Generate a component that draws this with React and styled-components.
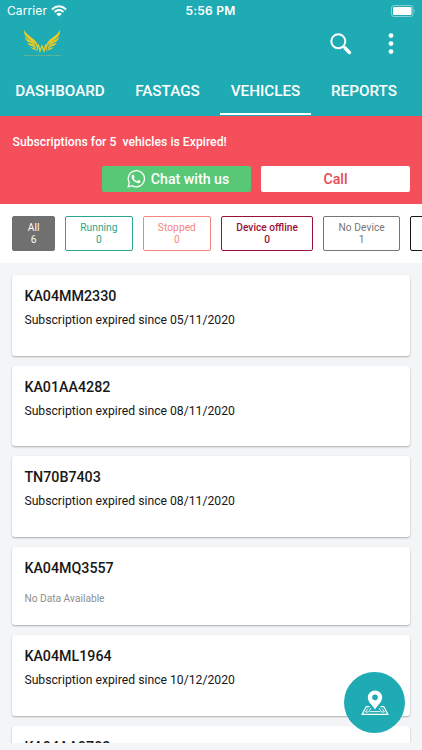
import React from "react";
import styled, { createGlobalStyle } from "styled-components";

const teal = "#1fabb3";

const GlobalStyle = createGlobalStyle`
  * { box-sizing: border-box; }
  html, body { margin: 0; height: 100%; overflow: hidden; background: #f4f5f7; }
  body { font-family: Roboto, "Liberation Sans", sans-serif; }
  button { font: inherit; border: 0; padding: 0; margin: 0; }
`;

const Screen = styled.div`
  position: relative;
  width: 422px;
  height: 750px;
  overflow: hidden;
  display: flex;
  flex-direction: column;
  background: #f4f5f7;
`;

const Header = styled.header`
  flex: none;
  height: 116px;
  background: ${teal};
  color: #fff;
`;

const StatusBar = styled.div`
  height: 22px;
  padding: 0 6px 0 7px;
  display: grid;
  grid-template-columns: 1fr auto 1fr;
  align-items: center;
  font: 400 12px/22px Inter, sans-serif;
`;

const Carrier = styled.div`
  display: flex;
  align-items: center;
  gap: 3.5px;
  letter-spacing: 0.1px;
`;

const Clock = styled.div`
  margin-right: 2px;
  font-weight: 600;
  letter-spacing: 0.2px;
`;

const Battery = styled.svg`
  justify-self: end;
`;

const TitleBar = styled.div`
  height: 44px;
  padding: 0 24px 0 23px;
  display: flex;
  align-items: center;
`;

const Logo = styled.svg`
  margin-right: auto;
`;

const SearchIcon = styled.svg`
  margin-right: 32px;
`;

const Tabs = styled.nav`
  height: 49px;
  padding-left: 5px;
  display: flex;
  gap: 10px;
`;

const Tab = styled.div`
  width: ${(p) => p.$width}px;
  height: 49px;
  flex: none;
  border-bottom: 2px solid ${(p) => (p.$active ? "#fff" : "transparent")};
  text-align: center;
  font-size: 15.25px;
  font-weight: 500;
  line-height: 50px;
  white-space: nowrap;
`;

const Alert = styled.section`
  flex: none;
  height: 88px;
  padding: 17px 12px 0 12.5px;
  background: #f44f5a;
  color: #fff;
`;

const AlertText = styled.div`
  font-size: 12.2px;
  font-weight: 500;
  line-height: 18px;
  letter-spacing: 0.02px;
  white-space: pre;
`;

const AlertActions = styled.div`
  margin-top: 15px;
  display: flex;
  justify-content: flex-end;
  gap: 10px;
`;

const ActionButton = styled.button`
  width: 149px;
  height: 26px;
  border-radius: 2px;
  display: flex;
  align-items: center;
  justify-content: center;
  gap: 6px;
  background: ${(p) => p.$bg};
  color: ${(p) => p.$color};
  font-size: 14.2px;
  font-weight: 500;
`;

const ChatButton = styled(ActionButton)`
  padding-left: 3px;
`;

const Filters = styled.div`
  flex: none;
  height: 59px;
  padding: 12px 0 0 12.4px;
  display: flex;
  gap: 10px;
  background: #fff;
  overflow: hidden;
`;

const Filter = styled.div`
  flex: none;
  width: ${(p) => p.$width}px;
  height: 35px;
  padding-top: 5px;
  border: 1px solid ${(p) => p.$color};
  border-radius: 2px;
  background: ${(p) => (p.$filled ? p.$color : "#fff")};
  color: ${(p) => (p.$filled ? "#fff" : p.$color)};
  font-size: 10.2px;
  font-weight: ${(p) => p.$weight || 400};
  line-height: 12px;
  letter-spacing: ${(p) => (p.$weight ? 0 : 0.06)}px;
  text-align: center;
`;

const VehicleList = styled.main`
  flex: none;
  height: 480px;
  padding: 12px 12px 0 12.4px;
  display: flex;
  flex-direction: column;
  gap: 10px;
  overflow: hidden;
`;

const Card = styled.article`
  flex: none;
  height: ${(p) => (p.$empty ? 78.5 : 80.6)}px;
  padding: 12px 12px 0;
  border-radius: 3px;
  background: #fff;
  box-shadow: 0 1px 2px rgba(0, 0, 0, 0.3);
`;

const Plate = styled.div`
  color: #171717;
  font-size: 14.25px;
  font-weight: 500;
  line-height: 18px;
`;

const Expiry = styled.div`
  margin-top: 7px;
  color: #171717;
  font-size: 12.2px;
  line-height: 17px;
`;

const NoData = styled.div`
  margin-top: 15px;
  color: #8e8e8e;
  font-size: 10.2px;
  line-height: 14px;
`;

const MapButton = styled.button`
  position: absolute;
  left: 344px;
  top: 672px;
  width: 61px;
  height: 61px;
  border-radius: 50%;
  display: flex;
  align-items: center;
  justify-content: center;
  background: ${teal};
`;

const tabs = [
  { label: "DASHBOARD", width: 110 },
  { label: "FASTAGS", width: 85 },
  { label: "VEHICLES", width: 91, active: true },
  { label: "REPORTS", width: 86 },
];

const filters = [
  { label: "All", count: 6, width: 42.5, color: "#707070", filled: true },
  { label: "Running", count: 0, width: 68, color: "#2ba58c" },
  { label: "Stopped", count: 0, width: 68, color: "#f58585" },
  { label: "Device offline", count: 0, width: 92.5, color: "#9c1237", weight: 500 },
  { label: "No Device", count: 1, width: 76.5, color: "#757575" },
  { label: "", count: "", width: 70, color: "#171717" },
];

const vehicles = [
  { plate: "KA04MM2330", expired: "05/11/2020" },
  { plate: "KA01AA4282", expired: "08/11/2020" },
  { plate: "TN70B7403", expired: "08/11/2020" },
  { plate: "KA04MQ3557", empty: true },
  { plate: "KA04ML1964", expired: "10/12/2020" },
  { plate: "KA04AA9702" },
];

function WingsLogo() {
  return (
    <Logo width="39" height="30" viewBox="0 0 39 30">
      <defs>
        <g id="wing">
          <path d="M1 1Q.8 6.5 5 9.5L12.5 15Q14 17 14.6 22.5Q16 17 13.5 13.5Q11.5 10.5 8 8.2Q3 5 1 1Z" />
          <path d="M1.8 7.8Q2.6 12.2 7 13.6L13.2 17.6Q11.8 13.6 8 12Q4 10.6 1.8 7.8Z" />
          <path d="M4.2 13.4Q6 17 9.5 17.3L13.6 20Q12.6 16.5 9.5 15.6Z" />
          <path d="M7.5 18Q9.6 21 13 21.2L14 22.3Q13.6 20 12 19.2Z" />
        </g>
      </defs>
      <g fill="#efcb22">
        <use href="#wing" />
        <use href="#wing" transform="matrix(-1 0 0 1 38 0)" />
      </g>
      <path d="M15.2 15.5L17 22L19 17L21 22L22.8 15.5" fill="none" stroke="#e3d02c" strokeWidth="1.3" />
      <text x="1" y="27.3" fill="#a8c05a" fontFamily="Roboto" fontSize="2.5" fontWeight="700" textLength="36.5">WINGS TECHNO SOLUTIONS</text>
    </Logo>
  );
}

export default function App() {
  return (
    <>
      <GlobalStyle />
      <Screen>
        <Header>
          <StatusBar>
            <Carrier>
              Carrier
              <svg width="16" height="12" viewBox="0 0 16 12">
                <g fill="none" stroke="#fff" strokeWidth="2">
                  <path d="M.9 4.4Q8 -1.9 15.1 4.4" />
                  <path d="M3.5 7.1Q8 3 12.5 7.1" />
                </g>
                <path d="M5.4 8.9Q8 6.8 10.6 8.9L8 11.6Z" fill="#fff" />
              </svg>
            </Carrier>
            <Clock>5:56 PM</Clock>
            <Battery width="25" height="12" viewBox="0 0 25 12">
              <rect x="0.5" y="0.5" width="21.5" height="11" rx="2.5" fill="none" stroke="#fff" strokeOpacity="0.45" />
              <rect x="2" y="2" width="18.5" height="8" rx="1.3" fill="#fff" />
              <path d="M23.2 4Q24.6 6 23.2 8Z" fill="#fff" opacity="0.5" />
            </Battery>
          </StatusBar>
          <TitleBar>
            <WingsLogo />
            <SearchIcon width="22" height="22" viewBox="0 0 22 22" fill="none" stroke="#fff">
              <circle cx="8.3" cy="8.3" r="7" strokeWidth="2" />
              <path d="M13.3 13.3L15 15" strokeWidth="2" />
              <path d="M15.2 15.2L19.4 19.4" strokeWidth="3.5" strokeLinecap="round" />
            </SearchIcon>
            <svg width="14" height="22" viewBox="0 0 14 22" fill="#fff">
              <circle cx="7" cy="2.6" r="2.4" />
              <circle cx="7" cy="10.6" r="2.4" />
              <circle cx="7" cy="18.6" r="2.4" />
            </svg>
          </TitleBar>
          <Tabs>
            {tabs.map((t) => (
              <Tab key={t.label} $width={t.width} $active={t.active}>{t.label}</Tab>
            ))}
          </Tabs>
        </Header>
        <Alert>
          <AlertText>{"Subscriptions for 5  vehicles is Expired!"}</AlertText>
          <AlertActions>
            <ChatButton $bg="#58c776" $color="#fff">
              <svg width="18" height="18" viewBox="0 0 24 24" fill="#fff">
                <path d="M17.5 14.4c-.3-.15-1.76-.87-2.03-.97-.27-.1-.47-.15-.67.15-.2.3-.77.97-.94 1.16-.17.2-.35.22-.64.08-.3-.15-1.26-.46-2.39-1.48-.88-.79-1.48-1.76-1.65-2.06-.17-.3-.02-.46.13-.6.13-.14.3-.35.45-.53.15-.17.2-.3.3-.5.1-.2.05-.37-.03-.52-.07-.15-.67-1.61-.91-2.2-.24-.59-.49-.5-.67-.51h-.57c-.2 0-.52.07-.79.37-.27.3-1.04 1.02-1.04 2.48s1.07 2.88 1.21 3.07c.15.2 2.1 3.2 5.08 4.49.71.3 1.26.49 1.69.62.71.23 1.36.2 1.87.12.57-.09 1.76-.72 2.01-1.41.25-.7.25-1.29.17-1.41-.07-.13-.27-.2-.57-.35" />
                <path d="M1.5 22.5L3.05 17A10.8 10.8 0 1 1 7 21Z" fill="none" stroke="#fff" strokeWidth="1.7" />
              </svg>
              Chat with us
            </ChatButton>
            <ActionButton $bg="#fff" $color="#e84954">Call</ActionButton>
          </AlertActions>
        </Alert>
        <Filters>
          {filters.map((f) => (
            <Filter key={f.label} $width={f.width} $color={f.color} $filled={f.filled} $weight={f.weight}>
              <div>{f.label}</div>
              <div>{f.count}</div>
            </Filter>
          ))}
        </Filters>
        <VehicleList>
          {vehicles.map((v) => (
            <Card key={v.plate} $empty={v.empty}>
              <Plate>{v.plate}</Plate>
              {v.expired && <Expiry>Subscription expired since {v.expired}</Expiry>}
              {v.empty && <NoData>No Data Available</NoData>}
            </Card>
          ))}
        </VehicleList>
        <MapButton aria-label="Map">
          <svg width="28" height="26" viewBox="0 0 28 26" fill="none" stroke="#fff">
            <path d="M8.5 16.6H5.2L1.2 24.4H26.8L22.8 16.6H19.5" strokeWidth="1.2" />
            <path d="M7 18.5L4.5 22H7.5L10 18M21 18.5L23.5 22H20.5L18 18M9 21.6H19" strokeWidth="0.9" />
            <path fillRule="evenodd" stroke="none" d="M14 .4A7.2 7.2 0 0 0 6.8 7.6C6.8 12 11 15 14 19.4C17 15 21.2 12 21.2 7.6A7.2 7.2 0 0 0 14 .4M14 4.6A2.8 2.8 0 1 1 14 10.2A2.8 2.8 0 0 1 14 4.6" fill="#fff" />
          </svg>
        </MapButton>
      </Screen>
    </>
  );
}
